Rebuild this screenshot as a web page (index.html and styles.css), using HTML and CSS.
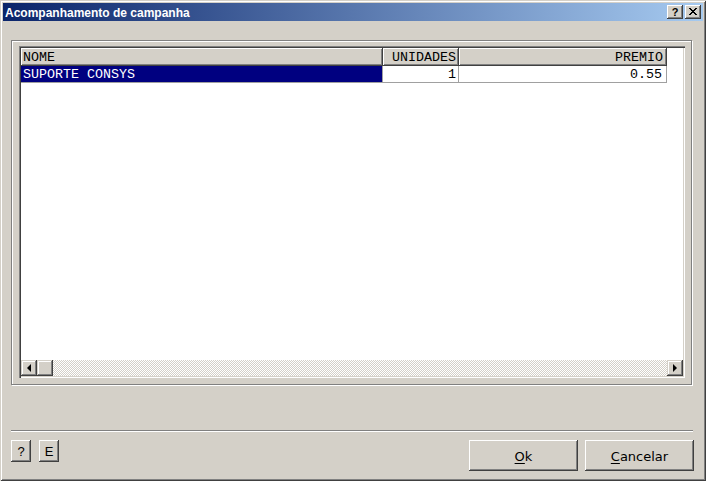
FILE: index.html
```html
<!DOCTYPE html>
<html>
<head>
<meta charset="utf-8">
<link rel="stylesheet" href="styles.css">
</head>
<body>
<div class="window">
  <div class="titlebar">
    <span class="title">Acompanhamento de campanha</span>
    <div class="caption-btns">
      <div class="cbtn help">?</div>
      <div class="cbtn close">
        <svg width="8" height="7" viewBox="0 0 8 7" shape-rendering="crispEdges">
          <path d="M0 0h2v1h-2zM6 0h2v1h-2zM1 1h2v1h-2zM5 1h2v1h-2zM2 2h4v1h-4zM3 3h2v1h-2zM2 4h4v1h-4zM1 5h2v1h-2zM5 5h2v1h-2zM0 6h2v1h-2zM6 6h2v1h-2z" fill="#000"/>
        </svg>
      </div>
    </div>
  </div>
  <div class="frame">
    <div class="list">
      <div class="grid">
        <div class="hrow">
          <div class="hcell c-nome">NOME</div>
          <div class="hcell c-uni right">UNIDADES</div>
          <div class="hcell c-pre right">PREMIO</div>
        </div>
        <div class="drow">
          <div class="dcell c-nome sel">SUPORTE CONSYS</div>
          <div class="dcell c-uni right">1</div>
          <div class="dcell c-pre right">0.55</div>
        </div>
      </div>
      <div class="hscroll">
        <div class="sbtn"><span class="arr-left"></span></div>
        <div class="sbtn thumb"></div>
        <div class="track"></div>
        <div class="sbtn"><span class="arr-right"></span></div>
      </div>
    </div>
  </div>
  <div class="sep"></div>
  <div class="btnrow">
    <div class="btn small">?</div>
    <div class="btn small">E</div>
    <div class="btn big ok"><u>O</u>k</div>
    <div class="btn big"><u>C</u>ancelar</div>
  </div>
</div>
</body>
</html>
```
FILE: styles.css
```css
html, body {
  margin: 0;
  padding: 0;
  overflow: hidden;
  background: #d4d0c8;
}
.window {
  width: 706px;
  height: 481px;
  box-sizing: border-box;
  padding: 3px;
  background: #d4d0c8;
  box-shadow: inset 1px 1px #d4d0c8, inset -1px -1px #404040, inset 2px 2px #fff, inset -2px -2px #808080;
  display: flex;
  flex-direction: column;
}
.titlebar {
  height: 18px;
  background: linear-gradient(to right, #0a246a, #a6caf0);
  display: flex;
  align-items: center;
  justify-content: space-between;
  padding-left: 2px;
}
.title {
  color: #fff;
  font: bold 12px "Liberation Sans", Arial, sans-serif;
  line-height: 18px;
  padding-top: 1px;
}
.caption-btns {
  display: flex;
  gap: 2px;
  padding-right: 2px;
}
.cbtn {
  width: 16px;
  height: 14px;
  box-sizing: border-box;
  background: #d4d0c8;
  box-shadow: inset -1px -1px #404040, inset 1px 1px #fff, inset -2px -2px #808080;
  display: flex;
  align-items: center;
  justify-content: center;
  font: bold 11px "Liberation Sans", Arial, sans-serif;
  color: #000;
  line-height: 14px;
}
.cbtn svg { display: block; margin-top: -1px; margin-left: -1px; }
.frame {
  margin: 19px 0 0 8px;
  width: 681px;
  height: 345px;
  box-sizing: border-box;
  border: 1px solid #808080;
  box-shadow: inset 1px 1px #fff, 1px 1px #fff;
  padding: 5px 0 0 7px;
}
.list {
  width: 666px;
  height: 332px;
  box-sizing: border-box;
  padding: 2px;
  background: #fff;
  box-shadow: inset 1px 1px #808080, inset 2px 2px #404040, inset -1px -1px #fff, inset -2px -2px #d4d0c8;
  display: flex;
  flex-direction: column;
}
.grid {
  flex: 1;
  font: 13.33px "Liberation Mono", "Courier New", monospace;
  color: #000;
}
.hrow, .drow { display: flex; }
.hcell {
  height: 18px;
  box-sizing: border-box;
  background: #d4d0c8;
  box-shadow: inset -1px -1px #404040, inset 1px 1px #fff, inset -2px -2px #808080;
  line-height: 17px;
  padding: 1px 3px 0 2px;
  white-space: nowrap;
}
.c-nome { width: 362px; }
.c-uni { width: 76px; }
.c-pre { width: 208px; }
.right { text-align: right; }
.hcell.c-pre { padding-right: 4px; }
.dcell {
  height: 17px;
  box-sizing: border-box;
  border-bottom: 1px solid #a0a0a0;
  border-right: 1px solid #a0a0a0;
  line-height: 16px;
  padding: 1px 2px 0 2px;
  white-space: nowrap;
}
.dcell.c-pre { padding-right: 4px; }
.dcell.sel {
  background: #000080;
  color: #fff;
}
.hscroll {
  height: 16px;
  display: flex;
}
.sbtn {
  width: 16px;
  height: 16px;
  box-sizing: border-box;
  background: #d4d0c8;
  box-shadow: inset -1px -1px #404040, inset 1px 1px #d4d0c8, inset -2px -2px #808080, inset 2px 2px #fff;
  display: flex;
  align-items: center;
  justify-content: center;
}
.track {
  flex: 1;
  background: repeating-conic-gradient(#fff 0 25%, #d4d0c8 0 50%) 0 0 / 2px 2px;
}
.arr-left {
  width: 0; height: 0;
  border-top: 4px solid transparent;
  border-bottom: 4px solid transparent;
  border-right: 4px solid #000;
  margin-left: -1px;
  margin-top: -1px;
}
.arr-right {
  width: 0; height: 0;
  border-top: 4px solid transparent;
  border-bottom: 4px solid transparent;
  border-left: 4px solid #000;
  margin-top: -1px;
}
.sep {
  margin: 45px 0 0 8px;
  width: 682px;
  border-top: 1px solid #808080;
  border-bottom: 1px solid #fff;
}
.btnrow {
  margin: 8px 0 0 8px;
  width: 683px;
  display: flex;
  align-items: flex-start;
}
.btn {
  box-sizing: border-box;
  background: #d4d0c8;
  box-shadow: inset -1px -1px #404040, inset 1px 1px #fff, inset -2px -2px #808080;
  display: flex;
  align-items: center;
  justify-content: center;
  font: 13px "DejaVu Sans", Tahoma, sans-serif;
  color: #000;
}
.btn.small {
  width: 20px;
  height: 22px;
  margin-right: 8px;
  font: 13px "Liberation Sans", Arial, sans-serif;
}
.btn.big {
  width: 109px;
  height: 31px;
  padding-top: 1px;
}
.btn.ok {
  margin-left: auto;
  margin-right: 7px;
}
.btn u { text-underline-offset: 2px; }
```
